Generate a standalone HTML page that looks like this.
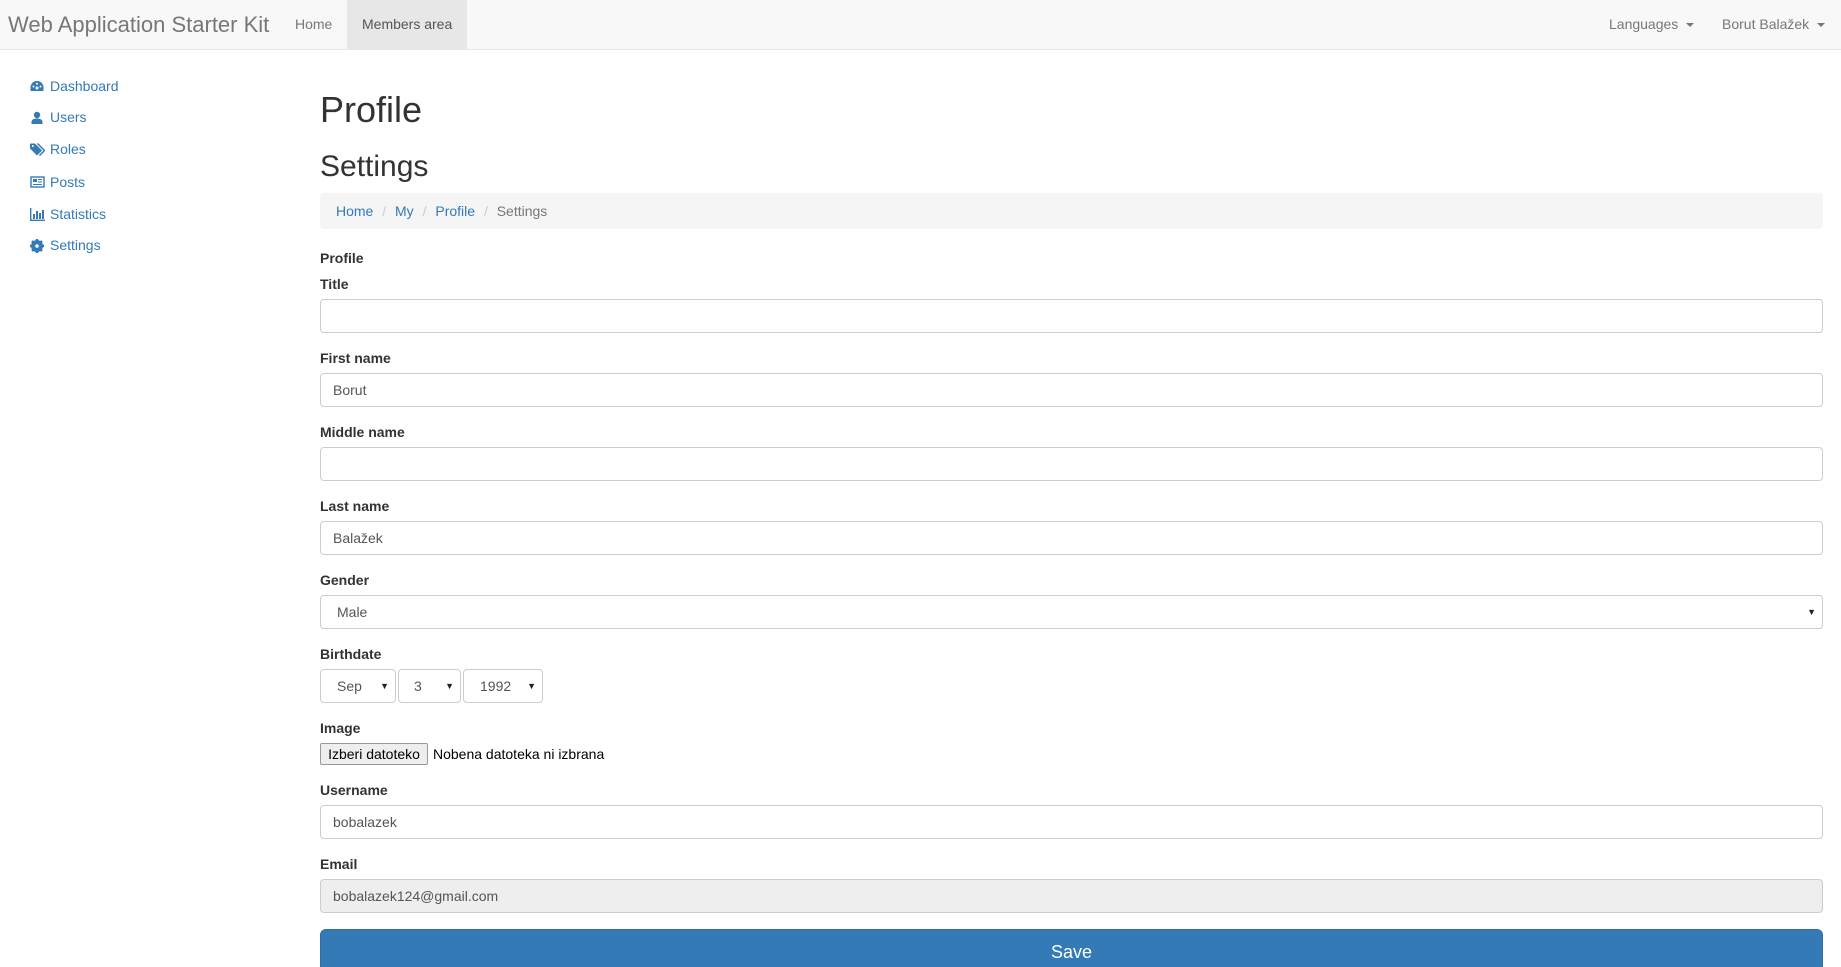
<!DOCTYPE html>
<html style="height:967px;overflow:hidden"><head><meta charset="utf-8"><style>
*{box-sizing:border-box}
body{margin:0;width:1841px;height:967px;overflow:hidden;font-family:"Liberation Sans",Arial,sans-serif;font-size:14px;color:#333;background:#fff;position:relative}
.nav{position:absolute;left:0;top:0;width:1841px;height:50px;background:#f8f8f8;border-bottom:1px solid #e7e7e7}
.nav span{position:absolute;top:0;line-height:49px;color:#777;white-space:nowrap}
.act{background:#e7e7e7;color:#555!important;padding:0 15px}
.caret{display:inline-block;width:0;height:0;border-top:4px solid #777;border-left:4px solid transparent;border-right:4px solid transparent;vertical-align:middle;margin-left:4px}
.side{position:absolute;left:30px;color:#337ab7;font-size:14px;line-height:20px}
.side svg{position:absolute;left:0;top:4px}
.side b{font-weight:normal;position:absolute;left:20px;white-space:nowrap}
.a{position:absolute;white-space:nowrap}
label,.lbl{position:absolute;left:320px;font-weight:bold;line-height:20px}
.in{position:absolute;left:320px;width:1503px;height:34px;border:1px solid #ccc;border-radius:4px;padding:0 12px;line-height:32px;color:#555}
.sel{position:absolute;height:34px;border:1px solid #ccc;border-radius:4px;line-height:32px;color:#555;background:#fff}
.arr{position:absolute;right:6px;top:0;font-size:9px;color:#222}
</style></head><body>
<div class="nav">
<span style="left:8px;font-size:22px;color:#777">Web Application Starter Kit</span>
<span style="left:295px">Home</span>
<span class="act" style="left:347px;width:120px">Members area</span>
<span style="left:1609px">Languages <i class="caret"></i></span>
<span style="left:1722px">Borut Balažek <i class="caret"></i></span>
</div>

<div class="side" style="top:76px"><svg width="14" height="12" viewBox="0 0 14 12"><path d="M7 1A6.5 6.5 0 0 0 .5 8v3h13V8A6.5 6.5 0 0 0 7 1z" fill="#337ab7"/><circle cx="7" cy="8" r="1.5" fill="#fff"/><circle cx="3.5" cy="6.5" r="1" fill="#fff"/><circle cx="10.5" cy="6.5" r="1" fill="#fff"/><circle cx="7" cy="3.8" r="1" fill="#fff"/></svg><b>Dashboard</b></div>
<div class="side" style="top:107px"><svg width="14" height="13" viewBox="0 0 14 13"><circle cx="7" cy="4" r="3.2" fill="#337ab7"/><path d="M1.5 13v-2.5Q2 7.5 7 7.5T12.5 10.5V13z" fill="#337ab7"/></svg><b>Users</b></div>
<div class="side" style="top:139px"><svg width="15" height="13" viewBox="0 0 15 13"><path d="M0 1V5.5L7 12.5 12 7.5 5 .5H.5z" fill="#337ab7"/><path d="M7.5.5 14.5 7.5 9.5 12.5" stroke="#337ab7" fill="none" stroke-width="1.5"/><circle cx="2.8" cy="3" r="1" fill="#fff"/></svg><b>Roles</b></div>
<div class="side" style="top:172px"><svg width="15" height="12" viewBox="0 0 15 12"><rect x="1" y="1" width="13" height="10" fill="none" stroke="#337ab7" stroke-width="1.4"/><rect x="3" y="3" width="4" height="3" fill="#337ab7"/><path d="M8 3.5h4M8 6h4M3 8.5h9" stroke="#337ab7"/></svg><b>Posts</b></div>
<div class="side" style="top:204px"><svg width="15" height="13" viewBox="0 0 15 13"><path d="M.7 0v12.3H15" stroke="#337ab7" stroke-width="1.4" fill="none"/><rect x="3" y="6" width="2" height="5" fill="#337ab7"/><rect x="6" y="3" width="2" height="8" fill="#337ab7"/><rect x="9" y="5" width="2" height="6" fill="#337ab7"/><rect x="12" y="2" width="2" height="9" fill="#337ab7"/></svg><b>Statistics</b></div>
<div class="side" style="top:235px"><svg width="14" height="14" viewBox="0 0 14 14"><circle cx="7" cy="7" r="4.5" fill="none" stroke="#337ab7" stroke-width="3"/><path d="M7 0v14M0 7h14M2 2l10 10M12 2 2 12" stroke="#337ab7" stroke-width="2.4"/><circle cx="7" cy="7" r="1.8" fill="#fff"/></svg><b>Settings</b></div>

<div class="a" style="left:320px;top:88px;font-size:36px;line-height:44px">Profile</div>
<div class="a" style="left:320px;top:149px;font-size:30px;line-height:36px">Settings</div>
<div class="a" style="left:320px;top:193px;width:1503px;height:36px;background:#f5f5f5;border-radius:4px;padding-left:16px;line-height:36px;color:#337ab7">Home <span style="color:#ccc;padding:0 5px">/</span> My <span style="color:#ccc;padding:0 5px">/</span> Profile <span style="color:#ccc;padding:0 5px">/</span> <span style="color:#777">Settings</span></div>

<div class="lbl" style="top:248px">Profile</div>
<label style="top:274px">Title</label><div class="in" style="top:299px"></div>
<label style="top:348px">First name</label><div class="in" style="top:373px">Borut</div>
<label style="top:422px">Middle name</label><div class="in" style="top:447px"></div>
<label style="top:496px">Last name</label><div class="in" style="top:521px">Balažek</div>
<label style="top:570px">Gender</label><div class="in" style="top:595px;padding-left:16px">Male<span class="arr">▼</span></div>
<label style="top:644px">Birthdate</label>
<div class="sel" style="left:320px;top:669px;width:76px;padding-left:16px">Sep<span class="arr">▼</span></div>
<div class="sel" style="left:398px;top:669px;width:63px;padding-left:15px">3<span class="arr">▼</span></div>
<div class="sel" style="left:463px;top:669px;width:80px;padding-left:16px">1992<span class="arr">▼</span></div>
<label style="top:718px">Image</label>
<div class="a" style="left:320px;top:743px;width:108px;height:22px;border:1px solid #999;border-radius:2px;background:#eee;text-align:center;line-height:20px;color:#000">Izberi datoteko</div>
<div class="a" style="left:433px;top:743px;line-height:22px;color:#000">Nobena datoteka ni izbrana</div>
<label style="top:780px">Username</label><div class="in" style="top:805px">bobalazek</div>
<label style="top:854px">Email</label><div class="in" style="top:879px;background:#eee">bobalazek124@gmail.com</div>
<div class="a" style="left:320px;top:929px;width:1503px;height:38px;background:#337ab7;border:1px solid #2e6da4;border-bottom:0;border-radius:6px 6px 0 0;color:#fff;font-size:18px;text-align:center;line-height:44px">Save</div>
</body></html>
